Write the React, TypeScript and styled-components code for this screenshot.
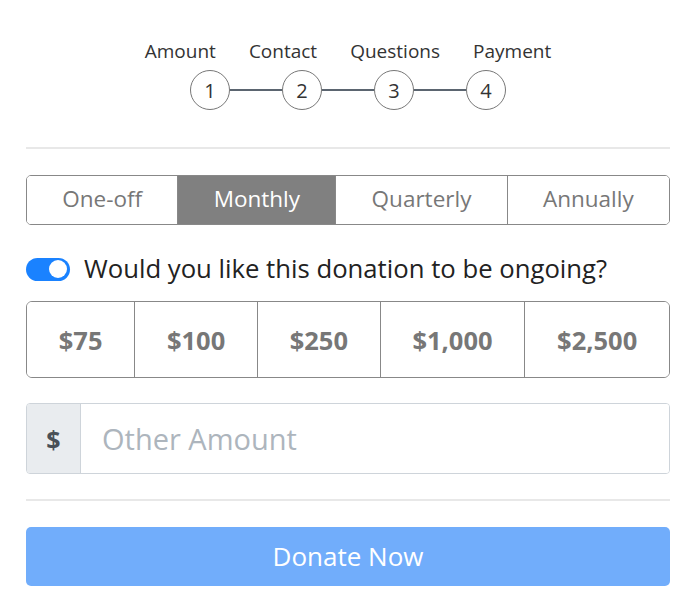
import styled, { createGlobalStyle } from "styled-components";
import { useState } from "react";

const steps = ["Amount", "Contact", "Questions", "Payment"];
const frequencies = ["One-off", "Monthly", "Quarterly", "Annually"];
const amounts = ["$75", "$100", "$250", "$1,000", "$2,500"];

const App = () => {
  const [frequency, setFrequency] = useState("Monthly");
  const [ongoing, setOngoing] = useState(true);

  return (
    <Container>
      <GlobalStyle />
      <Steps>
        <StepLabels>
          {steps.map((step) => (
            <StepLabel key={step}>{step}</StepLabel>
          ))}
        </StepLabels>
        <StepTrack>
          {steps.map((step, i) => (
            <StepItem key={step}>
              {i > 0 && <StepLine />}
              <StepCircle>{i + 1}</StepCircle>
            </StepItem>
          ))}
        </StepTrack>
      </Steps>
      <Divider $top={37} $bottom={26} />
      <Segmented>
        {frequencies.map((f) => (
          <Segment key={f} $active={f === frequency} onClick={() => setFrequency(f)}>
            {f}
          </Segment>
        ))}
      </Segmented>
      <ToggleRow>
        <Switch $on={ongoing} onClick={() => setOngoing(!ongoing)}>
          <Knob />
        </Switch>
        <ToggleText>Would you like this donation to be ongoing?</ToggleText>
      </ToggleRow>
      <Amounts>
        {amounts.map((a) => (
          <AmountButton key={a}>{a}</AmountButton>
        ))}
      </Amounts>
      <InputGroup>
        <Addon>$</Addon>
        <AmountInput placeholder="Other Amount" />
      </InputGroup>
      <Divider $top={25} $bottom={26} />
      <DonateButton>Donate Now</DonateButton>
    </Container>
  );
};

const GlobalStyle = createGlobalStyle`
  * { box-sizing: border-box; }
  body {
    margin: 0;
    background: #fff;
    font-family: "Open Sans", "Noto Sans", sans-serif;
  }
`;

const Container = styled.main`
  width: 696px;
  padding: 0 26px;
  display: flex;
  flex-direction: column;
`;

const Steps = styled.div`
  padding-top: 39px;
  display: flex;
  flex-direction: column;
  align-items: center;
  gap: 7px;
`;

const StepLabels = styled.div`
  display: flex;
  gap: 33px;
`;

const StepLabel = styled.span`
  font-size: 19px;
  line-height: 24px;
  color: #333;
`;

const StepTrack = styled.div`
  display: flex;
  align-items: center;
`;

const StepItem = styled.div`
  display: flex;
  align-items: center;
`;

const StepLine = styled.div`
  width: 52px;
  height: 2px;
  background: #5b6570;
`;

const StepCircle = styled.div`
  width: 40px;
  height: 40px;
  border: 1px solid #777;
  border-radius: 50%;
  display: flex;
  align-items: center;
  justify-content: center;
  font-size: 20px;
  color: #333;
`;

const Divider = styled.hr<{ $top: number; $bottom: number }>`
  width: 100%;
  margin: ${(p) => p.$top}px 0 ${(p) => p.$bottom}px;
  border: 0;
  border-top: 2px solid #e8e8e8;
`;

const Segmented = styled.div`
  display: flex;
  height: 50px;
  border: 1px solid #888;
  border-radius: 5px;
  overflow: hidden;
`;

const Segment = styled.button<{ $active: boolean }>`
  flex: 1 1 auto;
  padding: 0 20px 3px;
  border: 0;
  border-left: 1px solid #888;
  background: ${(p) => (p.$active ? "#808080" : "#fff")};
  color: ${(p) => (p.$active ? "#fff" : "#777")};
  font-family: inherit;
  font-size: 22.5px;
  cursor: pointer;

  &:first-child {
    border-left: 0;
  }
`;

const ToggleRow = styled.div`
  display: flex;
  align-items: center;
  gap: 14px;
  margin: 29px 0 17px;
`;

const Switch = styled.div<{ $on: boolean }>`
  width: 44px;
  height: 23px;
  border-radius: 12px;
  background: ${(p) => (p.$on ? "#1a82ff" : "#ccc")};
  display: flex;
  align-items: center;
  justify-content: ${(p) => (p.$on ? "flex-end" : "flex-start")};
  padding: 0 3px;
  cursor: pointer;
`;

const Knob = styled.div`
  width: 18px;
  height: 18px;
  border-radius: 50%;
  background: #fff;
`;

const ToggleText = styled.span`
  font-size: 25.7px;
  line-height: 30px;
  color: #222;
`;

const Amounts = styled.div`
  display: flex;
  height: 77px;
  border: 1px solid #888;
  border-radius: 6px;
  overflow: hidden;
`;

const AmountButton = styled.button`
  flex: 1 1 auto;
  padding: 0 10px;
  border: 0;
  border-left: 1px solid #888;
  background: #fff;
  color: #777;
  font-family: inherit;
  font-size: 25.5px;
  font-weight: 700;
  cursor: pointer;

  &:first-child {
    border-left: 0;
  }
`;

const InputGroup = styled.div`
  display: flex;
  height: 71px;
  margin-top: 25px;
  border: 1px solid #ced4da;
  border-radius: 4px;
  overflow: hidden;
`;

const Addon = styled.div`
  width: 54px;
  display: flex;
  align-items: center;
  justify-content: center;
  background: #e9ecef;
  border-right: 1px solid #ced4da;
  color: #495057;
  font-size: 25px;
  font-weight: 700;
`;

const AmountInput = styled.input`
  flex: 1;
  border: 0;
  outline: none;
  padding: 0 21px;
  font-family: inherit;
  font-size: 29px;
  color: #495057;

  &::placeholder {
    color: #adb5bd;
  }
`;

const DonateButton = styled.button`
  height: 59px;
  padding-bottom: 2px;
  border: 0;
  border-radius: 5px;
  background: #71adfb;
  color: #fff;
  font-family: inherit;
  font-size: 26px;
  cursor: pointer;
`;

export default App;
